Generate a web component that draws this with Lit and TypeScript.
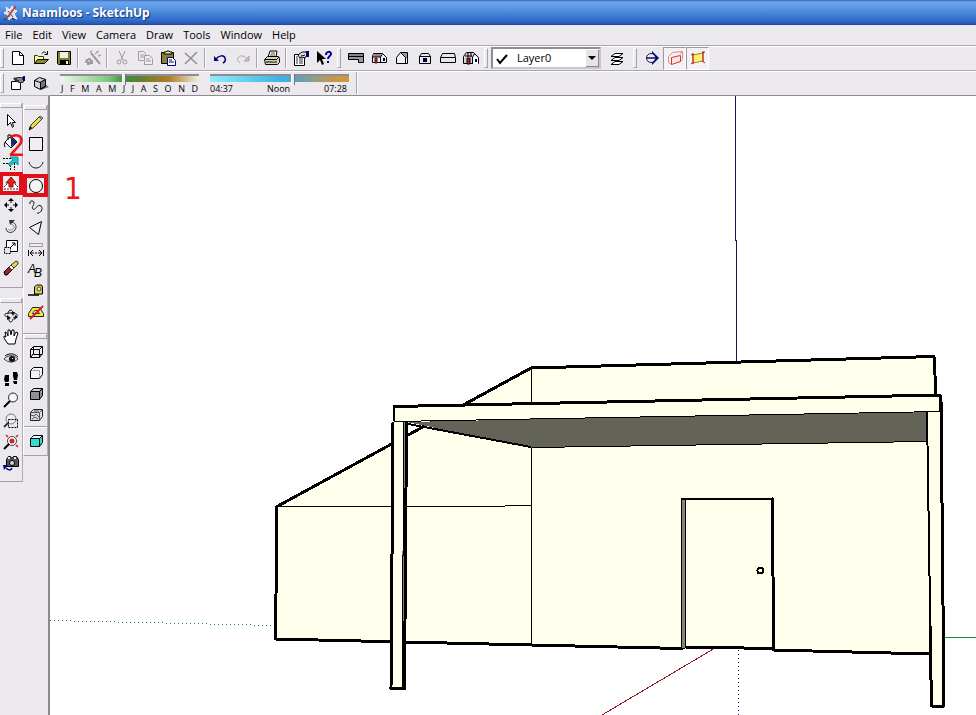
import { LitElement, html, svg, css, nothing } from "lit";
import { customElement, property } from "lit/decorators.js";

const icons: Record<string, unknown> = {
  logo: svg`<path d="M3 2l4 3 2-4 2 4 3 1-3 3 3 5-5-2-3 3-1-5-4-2 3-2z" fill="#d8dde8" stroke="#f6f6fa"/><path d="M5 6l5 6M9 5l-3 7" stroke="#59606e"/><path d="M13 1L4 13" stroke="#d23a2c" stroke-width="1.500"/><path d="M3 14l-2 1M9 13l3 2" stroke="#222"/>`,
  new: svg`<path d="M2.500 1.500h7l4 4v9h-11z" fill="#fff" stroke="#000"/><path d="M9.500 1.500v4h4" fill="none" stroke="#000"/>`,
  open: svg`<path d="M1.500 13.500v-8h3l1 1h5v3" fill="#ffffb0" stroke="#3d3a00"/><path d="M1.500 13.500l3-4h11l-4 4z" fill="#8b8920" stroke="#000"/><path d="M9 3.500c1-2 3-2 4.500 0M14.500 1v3.500h-3" fill="none" stroke="#000"/>`,
  save: svg`<path d="M1.500 1.500h13v13h-12l-1-1z" fill="#808020" stroke="#000"/><path d="M4 2h8v6H4z" fill="#eee"/><path d="M4 10h9v5H4z" fill="#000"/><path d="M10 11h2v3h-2z" fill="#eee"/>`,
  wand: svg`<path d="M1 9h2v-1h3v2h2v4H6l-2 1H2v-2H0z" fill="#9c999f"/><path d="M6 3l9 11" stroke="#9c999f" stroke-width="2"/><path d="M10 4l4-3M13 6l3-1M5 2l2-1M11 2h1" stroke="#aaa7ad" stroke-width="1.500"/><path d="M3 11h2" stroke="#eee"/>`,
  cut: svg`<path d="M5 1l4 9M11 1L7 10" stroke="#9c999f" stroke-width="1"/><circle cx="5" cy="12" r="2" fill="none" stroke="#9c999f"/><circle cx="11" cy="12" r="2" fill="none" stroke="#9c999f"/>`,
  copy: svg`<path d="M1.500 1.500h5l2 2v7h-7z" fill="#efedf2" stroke="#a09da3"/><path d="M7.500 5.500h5l3 3v6h-8z" fill="#efedf2" stroke="#a09da3"/><path d="M3 5h4M3 7h4M9 9h4M9 11h5" stroke="#a09da3"/>`,
  paste: svg`<path d="M1.500 2.500h12v11h-12z" fill="#85832c" stroke="#000"/><path d="M4 4v-2h2l1-1h2l1 1h2v2z" fill="#f2ed8a" stroke="#000"/><path d="M7.500 7.500h5l3 3v5h-8z" fill="#fff" stroke="#000080"/><path d="M9 10h3M9 12h5" stroke="#000080"/>`,
  remove: svg`<path d="M2 3l12 11M14 2L2 14" stroke="#8f8d93" stroke-width="1.500" fill="none"/>`,
  undo: svg`<path d="M4 9c3-4 8-4 9-1 1 2 0 4-2 5" stroke="#000080" stroke-width="1.500" fill="none"/><path d="M2 6v5h5z" fill="#000080"/>`,
  redo: svg`<path d="M12 9c-3-4-8-4-9-1-1 2 0 4 2 5" stroke="#a9a7ad" fill="none"/><path d="M14 6v5H9z" fill="#c0bec4" stroke="#a9a7ad"/>`,
  print: svg`<path d="M4 7l2-6h7l-1 6" fill="#fff" stroke="#000"/><path d="M.5 9.500l3-3h11l1 2v4l-2 2h-12z" fill="#d6d4c4" stroke="#000"/><path d="M1 9.500h12M2 12h11M13 9l2-2" stroke="#000" fill="none"/><path d="M8 11h3" stroke="#c8c000"/><path d="M7 3h4M6 5h5" stroke="#555"/>`,
  props: svg`<path d="M1.500 4.500h10v11h-10z" fill="#fff" stroke="#000"/><path d="M3 7h2M3 9h2M6 9h4M3 11h2M6 11h4M3 13h2M6 13h4" stroke="#333"/><path d="M5 5l4-3h4l1 3-2 3-3-1-2 1z" fill="#e4e2e8" stroke="#000"/><path d="M8 6l4-1" stroke="#000"/><path d="M13 1h3v6h-3z" fill="#000070"/>`,
  help: svg`<path d="M1 1v12l3-3 2 5 2-1-2-5h4z" fill="#000"/><path d="M10 5c0-4 5-4 5-1 0 2-3 2-3 5" stroke="#000090" stroke-width="2" fill="none"/><path d="M11 11h2v2h-2z" fill="#000090"/>`,
  iso: svg`<path d="M.5 3.500h15v9h-5v-3h-10z" fill="#9a989e" stroke="#000"/><path d="M1 6.500h14" stroke="#000"/><path d="M1 5h14" stroke="#77757b"/>`,
  top: svg`<path d="M1.500 6.500l1-3h9l4 4v5h-14z" fill="#f2f0f4" stroke="#000"/><path d="M2 4h8v3H2z" fill="#8b898f"/><path d="M1 7h9M9.500 13V7l2-3" stroke="#000" fill="none"/><path d="M4 8h2v5H4z" fill="#b52b20" stroke="#601010"/><path d="M12 8h2v3h-2z" fill="#000060"/>`,
  front: svg`<path d="M2.500 7.500l4-5h7v11h-11z" fill="#f2f0f4" stroke="#000"/><path d="M7 3h6v6z" fill="#99979d"/><path d="M6.500 2.500l5 5v6" fill="none" stroke="#000"/>`,
  right: svg`<path d="M2.500 6.500l2-3h7l2 3v7h-11z" fill="#e9e6ec" stroke="#000"/><path d="M2 6.500h12" stroke="#000"/><path d="M6 8h4v4H6z" fill="#000048"/>`,
  back: svg`<path d="M.5 7.500l2-4h12l1 4v5h-15zM1 7.500h14" fill="#e9e6ec" stroke="#000"/>`,
  left: svg`<path d="M.5 6.500l3-4h7l5 5v6h-15z" fill="#d6d4d9" stroke="#000"/><path d="M2 6h7M5 3v4M8 3v4" stroke="#000"/><path d="M4 8h3v6H4z" fill="#b52b20" stroke="#000"/><path d="M9.500 14V7l2-3" fill="none" stroke="#000"/><path d="M10 14V8l2-3 3 3v6z" fill="#fff"/><path d="M12 9h2v3h-2z" fill="#000060"/>`,
  layers: svg`<g fill="#fff" stroke="#000"><path d="M2 14.500l4-3h8l-4 3z"/><path d="M2 10.500l4-3h8l-4 3z"/><path d="M2 6.500l4-3h8l-4 3z"/></g>`,
  section: svg`<path d="M8 1l7 7-7 7z" fill="#000080"/><circle cx="7" cy="8" r="4.500" fill="#eceaef" stroke="#15155c"/><path d="M2 8h10" stroke="#15155c" stroke-width="1.500"/>`,
  planes: svg`<path d="M1.500 6.500l4-4 10-1v8l-3 3M1.500 6.500v6l3 2M13 4l2-2" fill="none" stroke="#d98a8a"/><path d="M4.500 7.500l9-2v6l-9 3z" fill="#fbe6e6" stroke="#d4323a"/>`,
  cuts: svg`<path d="M3 5l10-2v8l-10 2z" fill="#fbee75" stroke="#a4851f"/><path d="M3 3v11M13 1v11M1 5l3-1M12 3l3-1M1 14l3-2M12 11l3 2" stroke="#bd1c24" fill="none"/>`,
  shadow: svg`<path d="M1.500 6.500h9v8h-9z" fill="#fff" stroke="#000"/><path d="M3 3l5-1h5l2 3-2 3H9L5 6z" fill="#333"/><path d="M7 4h5M9 6h4" stroke="#ddd"/><path d="M13 1h2v5h-2z" fill="#000070"/>`,
  cube: svg`<path d="M8 15l8-3-4-3z" fill="#77757b"/><path d="M1.500 5.500l5-3 6 2v7l-5 3-6-3z" fill="#d5d3d9" stroke="#000"/><path d="M7.500 7v7l5-3V4.500z" fill="#77757b" stroke="#000"/><path d="M1.500 5.500l6 2" stroke="#000"/>`,
  arrow: svg`<path d="M4.500 1.500v11l3-3 2 5 1-1-1-4h3z" fill="#fff" stroke="#000"/>`,
  bucket: svg`<path d="M2 8l6-6 6 6-6 6z" fill="#fff" stroke="#000"/><path d="M8 3l6 5-6 5z" fill="#1a2870"/><path d="M3 7c-2 2-2 5-1 6M5 6V1h3v4" stroke="#000" fill="none"/>`,
  follow: svg`<path d="M0 3.500h8M7.500 15V8.500H0M11.500 8v7" fill="none" stroke="#000" stroke-dasharray="2 1"/><path d="M5 9l5-4-3-3h8v8l-3-3-5 4z" fill="#16c8cf" stroke="#168f96"/>`,
  push: svg`<path d="M1 11l3-3h8l3 3v3H1z" fill="#fff"/><path d="M1 13h14M1 11l3-3M15 11l-3-3" stroke="#222" fill="none" stroke-dasharray="2 1"/><path d="M8 1l5 6h-3v4H6V7H3z" fill="#db2415" stroke="#9d0805"/>`,
  move: svg`<path d="M8 2v4M8 10v4M2 8h4M10 8h4" stroke="#000"/><path d="M8 1l3 3H5zM8 15l3-3H5zM1 8l3-3v6zM15 8l-3-3v6z" fill="#000"/>`,
  rotate: svg`<path d="M9 4c4 1 5 5 3 8-3 4-9 3-9-2" fill="none" stroke="#333"/><path d="M8 6c3 1 4 3 2 5-2 2-4 1-5 0" fill="none" stroke="#888"/><path d="M6 2h6L7 7z" fill="#333"/>`,
  scale: svg`<path d="M3.500 9V1.500h11v11H8" fill="#fff" stroke="#000"/><path d="M1.500 8.500h6v6h-6z" fill="#e7e5eb" stroke="#000" stroke-dasharray="2 1"/><path d="M7 9l5-5M9 4h3v3" fill="none" stroke="#000"/>`,
  eraser: svg`<path d="M1 12l5-5 3 3-5 5H2z" fill="#a61e2a" stroke="#000"/><path d="M6 7l2-2 3 3-2 2z" fill="#fff" stroke="#444"/><path d="M8 5l5-4 2 1v2l-4 4z" fill="#e4d744" stroke="#333"/>`,
  orbit: svg`<path d="M5 9c-5-1-5-4 3-4s8 4 2 5M6 10c-1 4 3 6 4 1M5 6c0-5 5-5 5-1" fill="none" stroke="#111"/><path d="M4 7l4 3-4 2zM8 4h4l-2 4zM12 7l3 2-4 3z" fill="#111"/>`,
  hand: svg`<path d="M5 15L1 9V7l2 1-1-5 2 1 1 3V1h2l1 5 1-5h2v6l2-4 2 1-2 6-1 5z" fill="#fff" stroke="#000"/>`,
  eye: svg`<path d="M1 9c3-4 10-5 14 0-4 4-10 4-14 0z" fill="#dcdadf" stroke="#444"/><circle cx="9" cy="9" r="3" fill="#111"/><path d="M9 8h1v1H9z" fill="#fff"/><path d="M2 6c4-3 9-3 13 1" stroke="#000" fill="none"/>`,
  walk: svg`<path d="M2 4h4v6l-1 1H2L1 8zM2 12h4v3H2zM10 1h4l1 3-1 5h-3l-1-4zM10 10h4v3h-3z" fill="#000"/>`,
  zoom: svg`<circle cx="10" cy="5.500" r="4.500" fill="#f8f7fa" stroke="#222"/><path d="M7 9l-6 6" stroke="#000" stroke-width="2"/>`,
  zoomwin: svg`<circle cx="8" cy="6" r="5" fill="#eee" stroke="#777"/><path d="M5.500 6.500h9v8h-9z" fill="none" stroke="#000" stroke-dasharray="2 1"/><path d="M5 10l-4 4" stroke="#333" stroke-width="2"/>`,
  extents: svg`<circle cx="9" cy="7" r="4.500" fill="#fff" stroke="#444"/><circle cx="9" cy="7" r="2.500" fill="#d02525"/><path d="M3 1l2 2M15 1l-2 2M15 13l-2-2" stroke="#d02525" stroke-width="1.500"/><path d="M6 10l-5 5" stroke="#000" stroke-width="2"/>`,
  previous: svg`<path d="M3.500 4.500l2-3h2l1 2 2-2h3l2 3v7h-12z" fill="#55535a" stroke="#000"/><circle cx="9" cy="8" r="2.500" fill="#d9d7dd" stroke="#000"/><path d="M5 2h2v2H5zM11 2h2v2h-2z" fill="#e9e7ed"/><path d="M9 13c-1 3-4 2-6 0" fill="none" stroke="#000080" stroke-width="1.500"/><path d="M0 10h5l-4 5z" fill="#000080"/>`,
  pencil: svg`<path d="M1 15l2-5L12 1l3 2L5 13z" fill="#e9dd50" stroke="#3b3b10"/><path d="M1 15l1-4 2 2z" fill="#000"/><path d="M11 2l3 3" stroke="#444"/><path d="M12 1l3 2-1 1-3-2z" fill="#8a8ab8"/>`,
  rect: svg`<path d="M1.500 1.500h13v13h-13z" fill="#f0eef3" stroke="#000"/>`,
  arc: svg`<path d="M1 5c2 8 12 8 14 0" fill="none" stroke="#111"/>`,
  circle: svg`<circle cx="8" cy="8" r="6.500" fill="#f4f2f6" stroke="#000"/>`,
  freehand: svg`<path d="M2 5c-1-4 4-4 4-1 0 2-3 5-1 6 2 2 5-6 8-3 3 3-1 8-4 7" fill="none" stroke="#111"/>`,
  polygon: svg`<path d="M1.500 7.500l12-6-3 13z" fill="#f2f0f5" stroke="#000"/>`,
  measure: svg`<path d="M1.500 2.500h13v3h-13z" fill="#f0eef3" stroke="#99979d"/><path d="M.5 9v6M15.500 9v6M2 12h4M10 12h4M7 12h2M5 9l-3 3 3 3M11 9l3 3-3 3" fill="none" stroke="#000"/>`,
  text: svg`<text x="0" y="11" font-size="12" font-style="italic" font-family="Liberation Sans, sans-serif">A</text><text x="6" y="15" font-size="12" font-style="italic" font-family="Liberation Sans, sans-serif">B</text>`,
  tape: svg`<path d="M6.500 11V4l2-2h5l1 2v7z" fill="#dfd34a" stroke="#000"/><circle cx="11" cy="6" r="2" fill="#f4f0c0" stroke="#444"/><path d="M0 12h11" stroke="#000" stroke-width="1.500"/>`,
  protractor: svg`<path d="M.5 12.500v-3l4-6h7l4 6v3z" fill="#f1e640" stroke="#222"/><path d="M4.500 9.500l2-3h3l2 3z" fill="#fff" stroke="#333"/><path d="M2 15L15 2" stroke="#cf1d23" stroke-width="2"/>`,
  xray: svg`<path d="M2.500 5.500l3-3h9v7l-3 4h-9zM2.500 5.500h9v8M11.500 5.500l3-3M5.500 3v7.500h9M5 10l-2 3" fill="none" stroke="#000"/>`,
  wire: svg`<path d="M2.500 5.500l3-3h9v7l-3 4h-9z" fill="#f5f3f7" stroke="#000"/><path d="M2.500 5.500h9v8" fill="none" stroke="#777" stroke-dasharray="2 1"/>`,
  shaded: svg`<path d="M2.500 5.500l3-3h9v7l-3 4h-9z" fill="#918f95" stroke="#000"/><path d="M4 5l2-2h7l-2 2z" fill="#d5d3d9"/><path d="M2.500 5.500h9v8M11.500 5.500l3-3" fill="none" stroke="#000"/>`,
  textured: svg`<path d="M2.500 5.500l3-3h9v7l-3 4h-9z" fill="#dddbe0" stroke="#222"/><path d="M2.500 5.500h9v8M11.500 5.500l3-3M3 8l3 1 2-2 3 3M4 12l3-2 3 2M6 4h5" fill="none" stroke="#555"/>`,
  cyan: svg`<path d="M2.500 5.500l3-3h9v7l-3 4h-9z" fill="#38d9cf" stroke="#000"/><path d="M3 5l3-2h8l-3 2z" fill="#e5ffff"/><path d="M2.500 5.500h9v8M11.500 5.500l3-3" fill="none" stroke="#000"/>`,
};

type Item = [string, string] | "|";

const drawIcon = (name: string) =>
  html`<svg class="icon" viewBox="0 0 16 16" aria-hidden="true">${icons[name] ?? nothing}</svg>`;

@customElement("tool-group")
class ToolGroup extends LitElement {
  @property({ attribute: false }) items: Item[] = [];
  @property({ type: Boolean, reflect: true }) vertical = false;
  @property() marked = "";
  @property() pressed = "";

  static styles = css`
    :host { display: flex; align-items: center; flex: none; }
    :host([vertical]) { flex-direction: column; align-items: stretch; }
    button {
      display: flex; align-items: center; justify-content: center;
      width: 23px; height: 23px; padding: 0; border: 0;
      background: none; box-sizing: border-box;
    }
    :host([vertical]) button { width: 100%; height: 21px; }
    .icon { width: 16px; height: 16px; display: block; flex: none; overflow: visible; }
    .sep { width: 2px; height: 20px; margin: 0 2px; background: linear-gradient(90deg, #a5a3a9 50%, #fff 50%); }
    :host([vertical]) .sep { width: auto; height: 2px; margin: 1px 0 2px; background: linear-gradient(#a5a3a9 50%, #fff 50%); }
    .marked { box-shadow: inset 0 0 0 3px #e0101a, 0 0 0 1px #e0101a; }
    .pressed { background: #f4f1f4; border: 1px solid; border-color: #9b99a0 #fff #fff #9b99a0; }
  `;

  render() {
    return this.items.map((it) =>
      it === "|"
        ? html`<span class="sep"></span>`
        : html`<button
            class=${this.marked === it[0] ? "marked" : this.pressed.split(" ").includes(it[0]) ? "pressed" : ""}
            title=${it[1]} aria-label=${it[1]}>${drawIcon(it[0])}</button>`
    );
  }
}

@customElement("model-view")
class ModelView extends LitElement {
  static styles = css`
    :host { display: block; background: #fff; overflow: hidden; }
    svg { display: block; width: 100%; height: 100%; }
    .face { fill: #ffffec; }
    .shade { fill: #636358; }
    .jamb { fill: #85857b; }
    .edge { fill: none; stroke: #000; stroke-width: 3; stroke-linejoin: round; stroke-linecap: round; }
    .mid { fill: none; stroke: #000; stroke-width: 2; }
    .thin { fill: none; stroke: #000; stroke-width: 1; }
    .axis { fill: none; stroke-width: 1; }
    .blue { stroke: #15155c; }
    .green { stroke: #18911f; }
    .red { stroke: #8c1822; }
    .dots { stroke-dasharray: 1 3; }
  `;

  render() {
    return html`
      <svg viewBox="50 96 926 619" preserveAspectRatio="xMinYMin meet" role="img" aria-label="House model with porch" shape-rendering="crispEdges">
        <path class="axis blue" d="M735.500 96V240L736.500 241V362" />
        <path class="axis blue dots" d="M738.500 650V715" />
        <path class="axis green dots" d="M50 620.500L275 625.500" />
        <path class="axis green" d="M945 637L976 638" />
        <path class="axis red" d="M715 648L602 715" />

        <path class="face" d="M277 506L531 368L934 356L937 396L930 654L774 650V648H685L681 648L275 639Z" />
        <path class="edge" d="M936 394L934 356.500L531 368L277 506.500L275.500 639L681 648.500L685 647L773 648.500V650L930 654" />
        <path class="thin" d="M278 506.500H480L531 505.500M531.500 368V645" />
        <path class="shade" d="M407 422L927 411V442L532 448Z" />
        <path class="mid" d="M408 424L531 447" />
        <path class="thin" d="M532 447.500L927 441.500" />

        <path class="jamb" d="M681 498H686V648H681Z" />
        <path class="thin" d="M681.500 498V648M685.500 498V648" />
        <path class="mid" d="M681 499H773" />
        <path class="edge" d="M772.500 499L773.500 649" />
        <circle class="mid" cx="760.500" cy="570.500" r="3" />

        <path class="face" d="M394 406L940 395L941 411L394 421Z" />
        <path class="mid" d="M394 421V406" />
        <path class="edge" d="M394.500 406.500L940 395V411" />
        <path class="thin" d="M394 421.500L941 411.500" />

        <path class="face" d="M394 422H407L404 689H391Z" />
        <path class="jamb" d="M403 422H407L405 689H402Z" />
        <path class="thin" d="M403.500 422V555L402.500 556V688" />
        <path class="edge" d="M393 423L391 688.500H404.500L406.500 423" />

        <path class="face" d="M927 412H941L944 706H931Z" />
        <path class="mid" d="M927 412L930.500 640" />
        <path class="edge" d="M930 625L931.500 706H944L941 400" />
      </svg>`;
  }
}

@customElement("app-root")
class AppRoot extends LitElement {
  static styles = css`
    :host {
      display: flex; flex-direction: column; min-height: 100vh; position: relative;
      background: #ebe9ee; color: #000;
      font: 11px/14px "Open Sans", "Noto Sans", sans-serif;
    }
    .icon { width: 16px; height: 16px; display: block; flex: none; }
    .title {
      display: flex; align-items: center; gap: 3px; height: 25px; padding: 1px 3px 0;
      box-sizing: border-box;
      background: linear-gradient(#3568c0 0, #6ca6ec 8%, #5e9ae6 28%, #4583d8 55%, #336fca 80%, #2858b4 94%, #1e3f96 100%);
      color: #fff; text-shadow: 1px 1px 1px #17317a;
    }
    h1 { margin: 0; font: bold 12px/20px "Open Sans", sans-serif; }
    .menu { display: flex; gap: 10px; height: 20px; align-items: center; padding: 0 5px; box-sizing: border-box; }
    .menu button { border: 0; padding: 0; background: none; font: inherit; color: inherit; }
    .row { display: flex; align-items: center; height: 25px; box-sizing: border-box; border-top: 1px solid #aaa8ae; box-shadow: inset 0 1px #fff; }
    .edge { width: 4px; height: 20px; margin: 0 3px 0 2px; box-sizing: border-box; border: 1px solid; border-color: #fff #a3a1a7 #a3a1a7 #fff; flex: none; }
    .edge.first { margin: 0 2px 0 0; }
    .edge.wide { margin: 0 3px 0 5px; }
    .layer {
      display: flex; align-items: center; position: relative; width: 110px; height: 22px; margin-right: 4px;
      box-sizing: border-box; border: 2px solid; border-color: #8f8d93 #c9c7cd #c9c7cd #8f8d93; background: #fff;
    }
    .layer select { appearance: none; border: 0; width: 100%; height: 18px; padding: 0 18px 0 24px; background: none; font: inherit; color: #000; }
    .tick { position: absolute; left: 2px; top: 3px; width: 14px; height: 14px; pointer-events: none; }
    .drop { position: absolute; right: 0; top: 0; width: 14px; height: 18px; background: #e6e3e9; box-shadow: inset 1px 1px #fff, inset -1px -1px #88868c; pointer-events: none; }
    .time { display: flex; flex-direction: column; width: 139px; margin-left: 8px; height: 21px; }
    .time + .time { margin-left: 11px; }
    input[type="range"] { appearance: none; display: block; width: 100%; height: 10px; margin: 0; background: none; }
    input::-webkit-slider-runnable-track { height: 8px; border-top: 2px solid #8f8d93; box-sizing: border-box; }
    .date::-webkit-slider-runnable-track { background: linear-gradient(90deg, #f1f8ef, #7cc77c 35%, #3c8e3c 46%, #5a8135 56%, #ad7d26 78%, #f1ece0); }
    .hour::-webkit-slider-runnable-track { background: linear-gradient(90deg, #92edf8, #3fb3e8 50%, #5aa2c0 62%, #b99a58 85%, #d8962f); }
    input::-webkit-slider-thumb { appearance: none; width: 4px; height: 11px; margin-top: -2px; background: #eceaef; border-right: 1px solid #77757b; border-left: 1px solid #fff; box-sizing: border-box; }
    .scale { display: flex; justify-content: space-between; font-size: 9px; line-height: 11px; padding: 0 1px; }
    .hours { padding: 0 2px 0 0; }
    .end { width: 2px; height: 22px; margin-left: 7px; background: linear-gradient(90deg, #a3a1a7 50%, #fff 50%); }
    .main { display: flex; flex: 1; align-items: stretch; min-height: 0; }
    .side { display: flex; border-top: 1px solid #b5b3b9; box-sizing: border-box; width: 50px; border-right: 2px solid #8d8b91; flex: none; }
    .col { box-sizing: border-box; display: flex; flex-direction: column; }
    .a { width: 23px; padding-top: 7px; }
    .b { width: 25px; padding-top: 9px; }
    .palette { border-right: 1px solid #b0aeb4; border-bottom: 1px solid #a3a1a7; }
    .b .palette { border-left: 1px solid #fff; }
    .palette.modes { padding-bottom: 4px; }
    .palette.edit { padding-bottom: 9px; }
    .palette.draw { padding-bottom: 11px; }
    .palette.camera { padding-bottom: 8px; }
    .spacer { height: 10px; }
    .grip { height: 5px; margin: 0 0 2px; box-sizing: border-box; border: 1px solid; border-color: #fff #a3a1a7 #a3a1a7 #fff; }
    model-view { flex: 1; min-width: 0; border-top: 1px solid #8d8b91; }
    .note { position: absolute; color: #ee141c; font: 31px/30px "DejaVu Sans Condensed", "DejaVu Sans", sans-serif; pointer-events: none; }
    .one { left: 64px; top: 173px; }
    .two { left: 8px; top: 130px; }
  `;

  private std: Item[] = [
    ["new", "New"], ["open", "Open"], ["save", "Save"], "|", ["wand", "Make Component"], "|",
    ["cut", "Cut"], ["copy", "Copy"], ["paste", "Paste"], ["remove", "Erase"], "|",
    ["undo", "Undo"], ["redo", "Redo"], "|", ["print", "Print"], "|", ["props", "Properties"], ["help", "Context Help"],
  ];
  private views: Item[] = [["iso", "Iso"], ["top", "Top"], ["front", "Front"], ["right", "Right"], ["back", "Back"], ["left", "Left"]];
  private edit: Item[] = [
    ["arrow", "Select"], ["bucket", "Paint Bucket"], ["follow", "Follow Me"], ["push", "Push/Pull"],
    ["move", "Move"], ["rotate", "Rotate"], ["scale", "Scale"], ["eraser", "Eraser"],
  ];
  private camera: Item[] = [
    ["orbit", "Orbit"], ["hand", "Pan"], ["eye", "Look Around"], ["walk", "Walk"],
    ["zoom", "Zoom"], ["zoomwin", "Zoom Window"], ["extents", "Zoom Extents"], ["previous", "Previous"],
  ];
  private draw: Item[] = [
    ["pencil", "Line"], ["rect", "Rectangle"], ["arc", "Arc"], ["circle", "Circle"], ["freehand", "Freehand"],
    ["polygon", "Polygon"], ["measure", "Dimension"], ["text", "Text"], ["tape", "Tape Measure"], ["protractor", "Protractor"],
  ];
  private modes: Item[] = [["xray", "X-ray"], ["wire", "Hidden Line"], ["shaded", "Shaded"], ["textured", "Textured"], "|", ["cyan", "Monochrome"]];

  render() {
    return html`
      <header class="title">${drawIcon("logo")}<h1>Naamloos - SketchUp</h1></header>
      <nav class="menu">
        ${["File", "Edit", "View", "Camera", "Draw", "Tools", "Window", "Help"].map((m) => html`<button>${m}</button>`)}
      </nav>
      <div class="row">
        <span class="edge first"></span>
        <tool-group .items=${this.std}></tool-group>
        <span class="edge"></span>
        <tool-group .items=${this.views}></tool-group>
        <span class="edge"></span>
        <label class="layer">
          <svg class="tick" viewBox="0 0 14 14" aria-hidden="true"><path d="M2 7l3 4 7-8" fill="none" stroke="#000" stroke-width="2" /></svg>
          <select aria-label="Layer"><option>Layer0</option></select>
          <svg class="drop" viewBox="0 0 14 18" aria-hidden="true"><path d="M3 7h8l-4 4z" /></svg>
        </label>
        <tool-group .items=${[["layers", "Layer Manager"]]}></tool-group>
        <span class="edge wide"></span>
        <tool-group .items=${[["section", "Section Plane"], ["planes", "Display Section Planes"], ["cuts", "Display Section Cuts"]]} pressed="planes cuts"></tool-group>
      </div>
      <div class="row">
        <span class="edge first"></span>
        <tool-group .items=${[["shadow", "Shadow Settings"], ["cube", "Display Shadows"]]}></tool-group>
        <div class="time">
          <input class="date" type="range" aria-label="Date" min="0" max="100" value="46" />
          <div class="scale">${[..."JFMAMJJASOND"].map((m) => html`<span>${m}</span>`)}</div>
        </div>
        <div class="time">
          <input class="hour" type="range" aria-label="Time" min="0" max="100" value="60" />
          <div class="scale hours"><span>04:37</span><span>Noon</span><span>07:28</span></div>
        </div>
        <span class="end"></span>
      </div>
      <div class="main">
        <aside class="side">
          <div class="col a">
            <div class="palette edit"><div class="grip"></div><tool-group vertical .items=${this.edit} marked="push"></tool-group></div>
            <div class="spacer"></div>
            <div class="palette camera"><div class="grip"></div><tool-group vertical .items=${this.camera}></tool-group></div>
          </div>
          <div class="col b">
            <div class="palette draw"><div class="grip"></div><tool-group vertical .items=${this.draw} marked="circle"></tool-group></div>
            <div class="palette modes"><div class="grip"></div><tool-group vertical .items=${this.modes}></tool-group></div>
          </div>
        </aside>
        <model-view></model-view>
      </div>
      <span class="note one">1</span>
      <span class="note two">2</span>
    `;
  }
}
